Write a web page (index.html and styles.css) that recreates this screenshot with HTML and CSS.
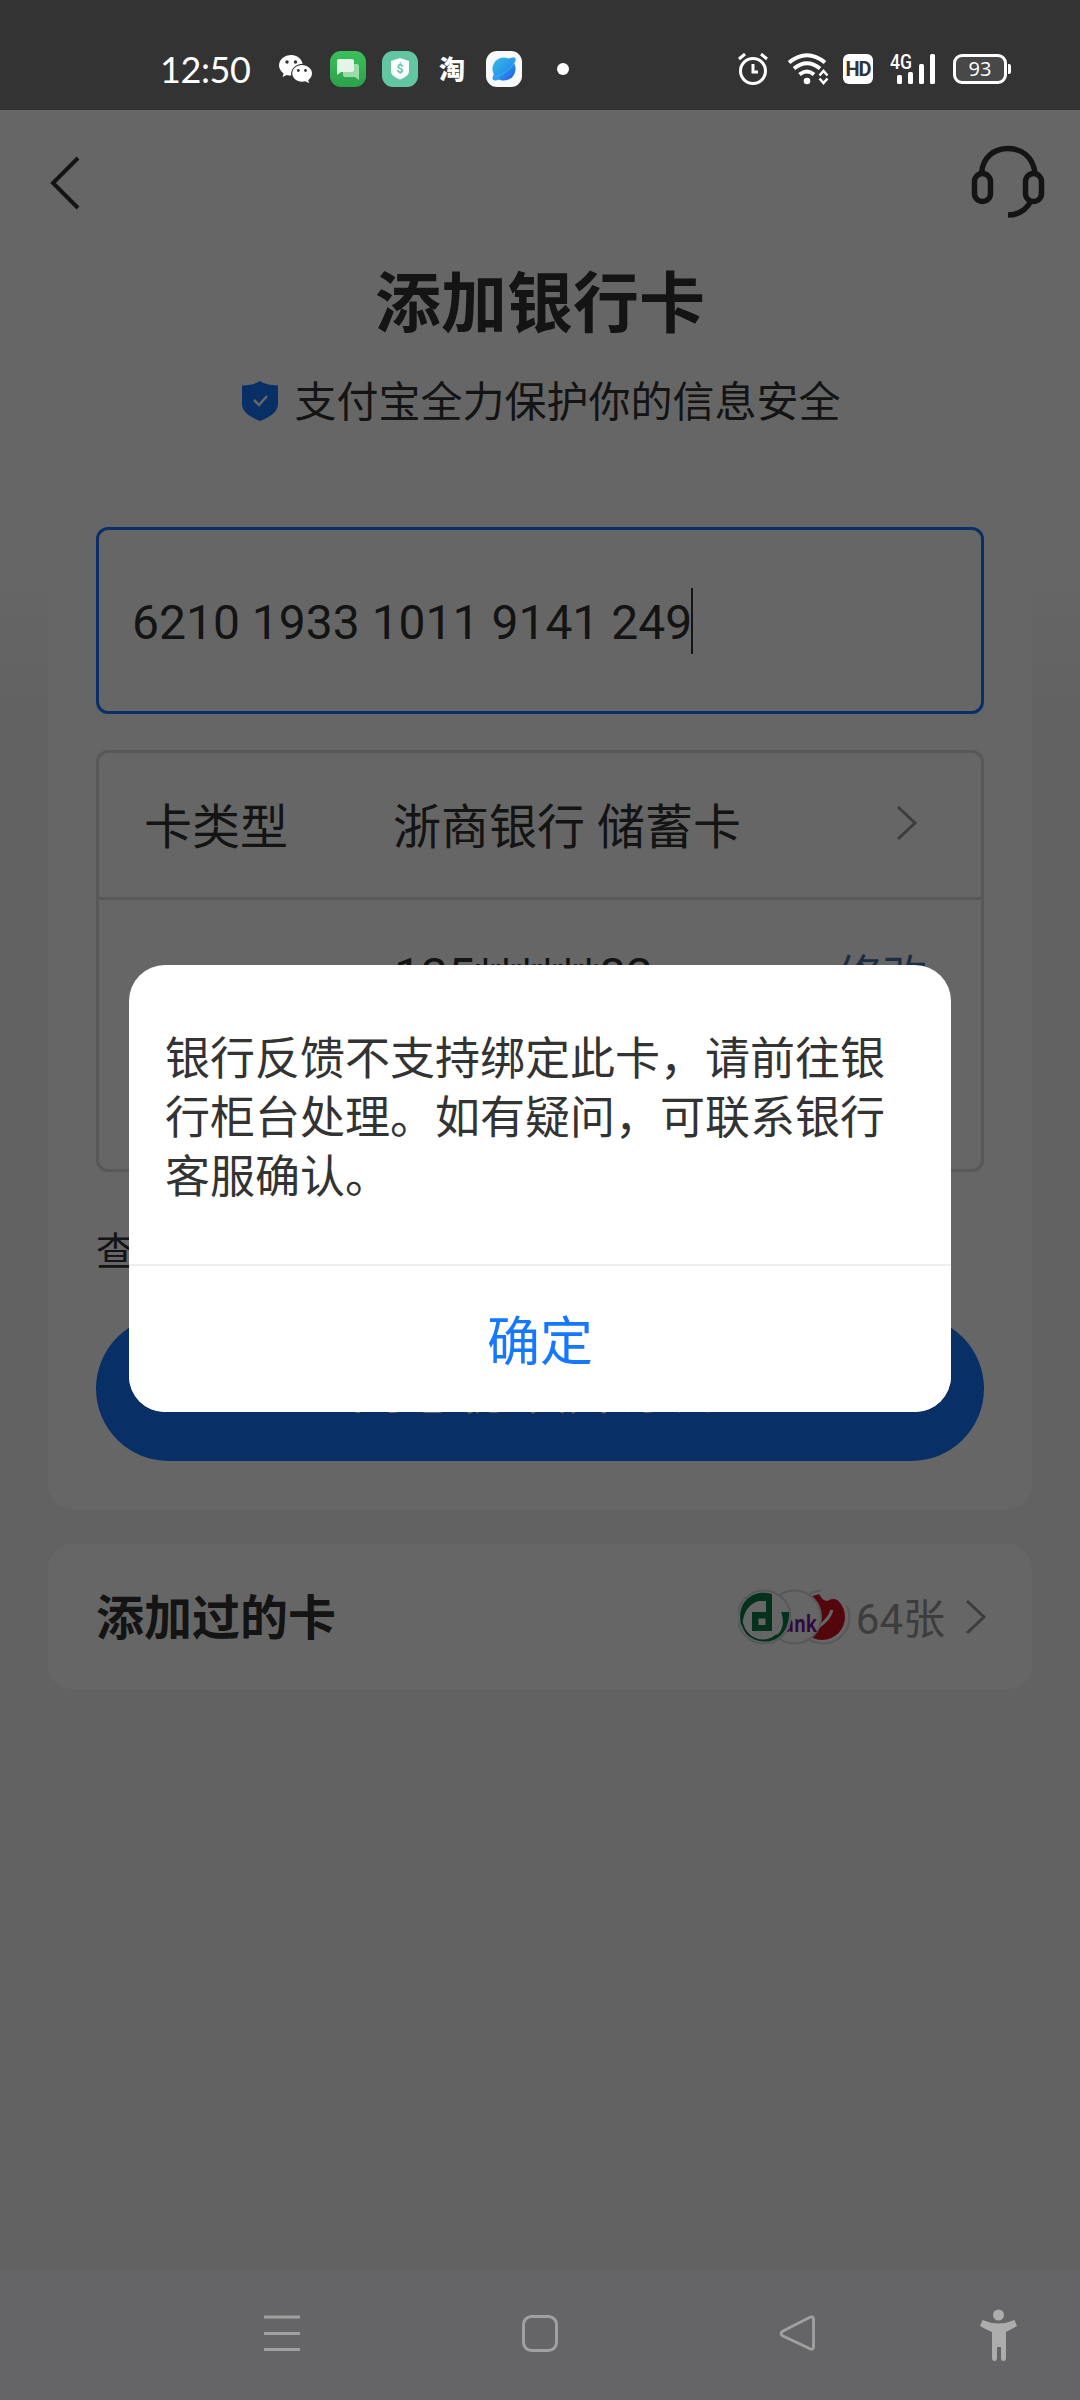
FILE: index.html
```html
<!DOCTYPE html>
<html lang="zh-CN">
<head>
<meta charset="utf-8">
<title>添加银行卡</title>
<link rel="stylesheet" href="styles.css">
</head>
<body>
<div class="screen">
  <header class="status">
    <div class="status-left">
      <span class="clock">12:50</span>
      <svg class="wechat" width="34" height="30" viewBox="0 0 34 30"><path fill="#fff" d="M12.500 1C5.500 1 0 5.500 0 11.300c0 3.300 1.800 6.200 4.600 8.100L3.500 23l4.200-2.100c1.500.4 3 .7 4.500.7-.9-6.700 4.800-11.800 11.500-11.800C22.500 4.500 18 1 12.500 1z"/><path fill="#fff" d="M33 19.300c0-4.700-4.600-8.400-10-8.400s-9.700 3.700-9.700 8.400 4.300 8.500 9.700 8.500c1.200 0 2.400-.2 3.500-.5l3.600 1.900-.9-3c2.300-1.600 3.800-4.100 3.800-6.900z"/><g fill="#333"><circle cx="8" cy="8" r="1.700"/><circle cx="16.500" cy="8" r="1.700"/><circle cx="19.300" cy="16.500" r="1.400"/><circle cx="26.500" cy="16.500" r="1.400"/></g></svg>
      <svg class="app" width="36" height="36" viewBox="0 0 36 36"><defs><linearGradient id="g1" x2="0" y2="1"><stop stop-color="#3bc05c"/><stop offset="1" stop-color="#2ca14b"/></linearGradient></defs><rect width="36" height="36" rx="11" fill="url(#g1)"/><path fill="#9bdcaa" d="M14 13h13a2 2 0 0 1 2 2v14l-4-3H15a2 2 0 0 1-2-2V14z"/><path fill="#e3f5e7" d="M9 8h13a2 2 0 0 1 2 2v9a2 2 0 0 1-2 2H11l-4 3V10a2 2 0 0 1 2-2z"/></svg>
      <svg class="app" width="36" height="36" viewBox="0 0 36 36"><rect width="36" height="36" rx="11" fill="#63c6a2"/><path fill="#fff" d="M18 7l9 3v10c0 4-4 6.500-9 8.500-5-2-9-4.500-9-8.500V10z"/><text x="18" y="22" text-anchor="middle" font-family="Roboto, sans-serif" font-size="12" font-weight="700" fill="#63c6a2">$</text></svg>
      <span class="tao">淘</span>
      <svg class="app" width="36" height="36" viewBox="0 0 36 36"><defs><linearGradient id="g2" x2="1" y2="1"><stop stop-color="#35bfe6"/><stop offset=".5" stop-color="#299ae9"/><stop offset="1" stop-color="#2850ee"/></linearGradient></defs><rect width="36" height="36" rx="11" fill="#f7f9fc"/><circle cx="18" cy="18" r="11.500" fill="url(#g2)"/><path fill="#2c9df0" d="M22 8c4-2 7-2 7.500-.5S29 12 27 14zM14 28c-3 1.700-6 2-7 .7S7 24 9 22z"/><path d="M9 26Q20 23 28 12" stroke="#3fb4f4" stroke-width="1" fill="none"/></svg>
      <span class="dot"></span>
    </div>
    <div class="status-right">
      <svg width="30" height="32" viewBox="0 0 30 32" fill="none" stroke="#fff" stroke-width="3"><circle cx="15" cy="18" r="12.500"/><path d="M1 6l6-5M29 6l-6-5"/><path d="M15 11v8h5"/></svg>
      <svg class="wifi" width="40" height="32" viewBox="0 0 40 32" fill="none" stroke="#fff" stroke-width="4"><path d="M1 9.500Q19-5 37 9.500M6 15.500Q19 5 32 15.500M11.500 21.500q7.500-6 14.500 0"/><circle cx="19" cy="28" r="3.300" fill="#fff" stroke="none"/><path stroke-width="2.500" d="M31.500 22.500l4-4.500 4 4.500M31.500 25.500l4 4.500 4-4.500"/></svg>
      <span class="hd">HD</span>
      <svg class="signal" width="46" height="32" viewBox="0 0 46 32"><text x="0" y="16" font-family="Roboto, sans-serif" font-size="20" font-weight="500" fill="#fff" textLength="22" lengthAdjust="spacingAndGlyphs">4G</text><g fill="#fff"><rect x="7" y="22" width="5" height="9" rx="1.500"/><rect x="18" y="19" width="5" height="12" rx="1.500"/><rect x="29" y="11" width="5" height="20" rx="1.500"/><rect x="40" y="1" width="5" height="30" rx="1.500"/></g></svg>
      <span class="battery">93</span><span class="battery-tip"></span>
    </div>
  </header>

  <main class="page">
    <div class="topbar">
      <svg width="34" height="56" viewBox="0 0 34 56" fill="none" stroke="#333" stroke-width="4"><path d="M30 3L5 28l25 25"/></svg>
      <svg width="74" height="74" viewBox="0 0 74 74" fill="none" stroke="#333" stroke-width="5.500"><path d="M10.500 28C12 12 23 3.500 37 3.500S62 12 64 28"/><rect x="3.500" y="28.500" width="16" height="28" rx="8"/><rect x="54.500" y="28.500" width="16" height="28" rx="8"/><path d="M60 56c-5 9-12 14-23 14"/></svg>
    </div>
    <h1 class="title">添加银行卡</h1>
    <p class="promise">
      <svg width="38" height="40" viewBox="0 0 38 40"><path fill="#1677ff" d="M19 0c4 3 10 4 18 4.500V23c0 8-8 13-18 17C9 36 1 31 1 23V4.500C9 4 15 3 19 0z"/><path d="M13 19l5 5 8-9" fill="none" stroke="#fff" stroke-width="2.500"/></svg>
      <span>支付宝全力保护你的信息安全</span>
    </p>

    <section class="card form">
      <div class="number">6210 1933 1011 9141 249<i class="caret"></i></div>
      <div class="details">
        <div class="row type">
          <span class="label">卡类型</span><span class="value">浙商银行 储蓄卡</span>
          <svg width="22" height="36" viewBox="0 0 22 36" fill="none" stroke="#999" stroke-width="3"><path d="M2 2l17 16L2 34"/></svg>
        </div>
        <div class="row phone"><span class="value">135******83</span><a class="edit">修改</a></div>
      </div>
      <p class="agreement">查看协议</p>
      <div class="submit">同意协议并添加</div>
    </section>

    <section class="card added">
      <strong class="added-title">添加过的卡</strong>
      <svg class="banks" width="114" height="56" viewBox="0 0 114 56"><g fill="#fff" stroke="#d6dcde" stroke-width="2"><circle cx="85" cy="28" r="26.500"/></g><circle cx="84" cy="28" r="23" fill="#d00f20"/><path fill="#fff" d="M85 0l18 0q8 6 8 18l-8-4q-6-7-14-2-6-1-8-8z"/><path d="M94 21q-3 10-14 17" fill="none" stroke="#fff" stroke-width="3"/><circle cx="56.500" cy="28" r="26.500" fill="#fff" stroke="#d6dcde" stroke-width="2"/><text x="45" y="43" font-family="Open Sans, sans-serif" font-size="24" font-weight="700" fill="#7b169b" textLength="34" lengthAdjust="spacingAndGlyphs">ank</text><circle cx="26" cy="28" r="26.500" fill="#fff" stroke="#d6dcde" stroke-width="2"/><path fill="#087a48" d="M3 36C-2 14 14-1 34 5v7C17 8 4 19 5 37zM43 23h8c1 20-14 34-31 28 17 3 30-10 23-28z"/><path d="M4 34c4 16 21 23 35 12" fill="none" stroke="#087a48" stroke-width="2"/><path fill="#087a48" fill-rule="evenodd" d="M14 23h14v-11h-7V7h13v35H14zM20.500 29.500v6.500h7v-6.500z"/></svg>
      <span class="count">64张</span>
      <svg width="22" height="36" viewBox="0 0 22 36" fill="none" stroke="#999" stroke-width="3"><path d="M2 2l17 16L2 34"/></svg>
    </section>
  </main>

  <nav class="nav">
    <svg width="880" height="60" viewBox="0 0 880 60" fill="none" stroke="#a0a0a0" stroke-width="3"><path d="M64 14h36M64 30.500h36M64 46.500h36"/><rect x="323.500" y="13.500" width="33" height="34" rx="8"/><path d="M583 28L609.500 14.500Q613.500 12.500 613.500 16V44Q613.500 47.500 609.500 45.500L583 33Q579 30.500 583 28z" stroke-width="2.800"/><g fill="#adadad" stroke="none"><circle cx="798.500" cy="12" r="5.500"/><path d="M782.500 17q16 7 32 0l2.500 6q-5 3-11 6v26q0 3-2.500 3t-2.500-3V44h-4v11q0 3-2.500 3t-2.500-3V29q-7-3-12-6z"/></g></svg>
  </nav>

  <div class="mask">
    <div class="dialog" role="dialog">
      <p class="message">银行反馈不支持绑定此卡，请前往银行柜台处理。如有疑问，可联系银行客服确认。</p>
      <button class="confirm">确定</button>
    </div>
  </div>
</div>
</body>
</html>
```
FILE: styles.css
```css
* { box-sizing: border-box; }
body { margin: 0; font-family: Roboto, "Noto Sans CJK SC", sans-serif; color: #333; }
h1, p { margin: 0; }
svg { display: block; flex: none; }

.screen { position: relative; width: 1080px; height: 2400px; overflow: hidden; display: flex; flex-direction: column; }

.status { height: 110px; flex: none; background: #333; color: #fff; display: flex; justify-content: space-between; padding: 0 68px 0 160px; }
.status-left, .status-right { display: flex; align-items: center; height: 138px; }
.clock { width: 119px; font: 36px/40px Lato, sans-serif; letter-spacing: -.4px; white-space: nowrap; }
.wechat { margin-right: 17px; }
.app { margin-right: 16px; }
.tao { width: 36px; margin-right: 16px; text-align: center; font: 900 26px/40px "Noto Sans CJK SC", sans-serif; height: 42px; }
.dot { width: 12px; height: 12px; margin-left: 19px; border-radius: 50%; background: #fff; }
.wifi { margin-left: 20px; overflow: visible; }
.hd { width: 30px; height: 30px; margin-left: 15px; border-radius: 6px; background: #fff; color: #333; font: 700 20px/31px Roboto, sans-serif; text-align: center; letter-spacing: -1px; }
.signal { margin-left: 17px; }
.battery { width: 54px; height: 30px; margin-left: 17px; border: 3px solid #fff; border-radius: 9px; background: #484848; font: 400 20px/24px "Open Sans", sans-serif; text-align: center; }
.battery-tip { width: 3px; height: 10px; margin: 0 1px; background: #fff; border-radius: 0 2px 2px 0; }

.page { flex: 1; background: linear-gradient(#fff 460px, #f5f5f5 600px); }
.topbar { height: 147px; padding: 35px 35px 0 48px; display: flex; justify-content: space-between; }
.topbar svg:first-child { margin-top: 10px; }
.title { height: 96px; font-size: 66px; line-height: 96px; font-weight: 700; text-align: center; }
.promise { height: 60px; margin-top: 20px; display: flex; justify-content: center; align-items: center; gap: 15px; padding-left: 2px; font-size: 42px; line-height: 60px; }
.promise svg { margin-top: -5px; }

.card { width: 984px; margin: 0 auto; background: #fff; border-radius: 24px; }
.form { height: 1018px; margin-top: 58px; padding: 36px 48px 48px; }
.number { height: 187px; display: flex; align-items: center; padding: 4px 0 0 33px; border: 3px solid #1677ff; border-radius: 12px; font-size: 48px; white-space: pre; }
.caret { width: 2px; height: 66px; margin: -4px 0 0 -1px; background: #333; }
.details { height: 422px; margin-top: 36px; border: 3px solid #ddd; border-radius: 12px; font-size: 48px; }
.row { display: flex; align-items: center; padding: 0 63px 5px 45px; }
.type { height: 147px; border-bottom: 3px solid #ddd; }
.label { width: 249px; }
.type .value { flex: 1; }
.phone { height: 150px; padding: 0 54px 0 295px; justify-content: space-between; }
.edit { margin-top: -4px; color: #4a6ea9; font-size: 45px; }
.agreement { height: 60px; margin-top: 50px; font-size: 39px; line-height: 60px; }
.submit { height: 145px; margin-top: 34px; border-radius: 73px; background: #1677ff; color: #fff; font-size: 54px; line-height: 150px; text-align: center; }

.added { height: 145px; margin-top: 35px; padding: 0 45px 0 48px; display: flex; align-items: center; }
.added-title { flex: 1; margin-top: -5px; font-size: 48px; font-weight: 700; }
.count { margin: -3px 20px 0 4px; font-size: 42px; color: #999; }

.nav { position: relative; z-index: 2; flex: none; height: 130px; background: #656567; padding: 33px 0 0 200px; }
.mask { position: absolute; inset: 110px 0 0; background: rgba(0, 0, 0, .6); }
.dialog { width: 822px; height: 447px; margin: 855px auto 0; background: #fff; border-radius: 36px; overflow: hidden; display: flex; flex-direction: column; }
.message { height: 301px; padding: 65px 36px 0; font-size: 45px; line-height: 59px; border-bottom: 2px solid #eee; }
.confirm { flex: 1; border: 0; padding: 9px 0 0; background: #fff; color: #1677ff; font: 53px/1 Roboto, "Noto Sans CJK SC", sans-serif; }
```
